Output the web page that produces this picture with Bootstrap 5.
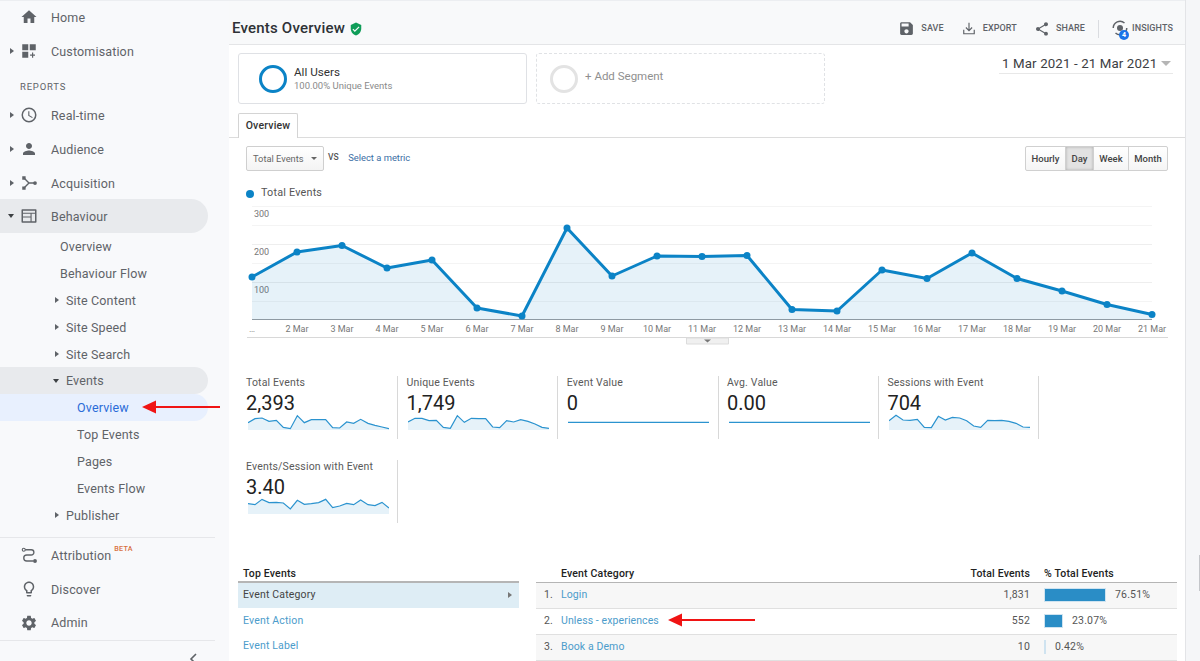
<!DOCTYPE html>
<html lang="en">
<head>
<meta charset="utf-8">
<title>Events Overview</title>
<link href="https://cdn.jsdelivr.net/npm/bootstrap@5.3.0/dist/css/bootstrap.min.css" rel="stylesheet">
<style>
html,body{height:661px;overflow:hidden;margin:0}
body{font-family:Roboto,"Liberation Sans",sans-serif;color:#333;background:#fff;position:relative}
.shell{height:661px}
.side{width:229px;flex:none;background:#f8f9fb;color:#5f6368;font-size:12.5px;letter-spacing:.15px;box-shadow:inset 0 1px 0 #eceef1}
.srow{height:34px;display:flex;align-items:center;position:relative;width:208px}
.srow .ico{position:absolute;left:20px;top:50%;transform:translateY(-50%);width:18px;height:18px;fill:#5f6368}
.srow .lbl{margin-left:51px;margin-top:2px}
.srow.sub{height:27px}
.srow.sub .lbl{margin-left:60px}
.srow.sub2 .lbl{margin-left:66px}
.srow.sub3 .lbl{margin-left:77px}
.srow.short{height:33.5px}
.tri{position:absolute;width:0;height:0;border-style:solid}
.tri-r{border-width:3.5px 0 3.5px 4px;border-color:transparent transparent transparent #5f6368;left:10px;top:50%;margin-top:-3.5px}
.tri-d{border-width:4px 3.5px 0 3.5px;border-color:#3c4043 transparent transparent transparent;left:8px;top:50%;margin-top:-2px}
.sub2 .tri-r{left:55px}
.sub2 .tri-d{left:53px}
.sec-lab{height:30px;padding:13px 0 0 20px;font-size:9.5px;letter-spacing:.8px;color:#5f6368;line-height:12px}
.pill{background:#e8eaed;border-radius:0 17px 17px 0}
.pill-blue{background:#e8f0fe;color:#2b6cd8;border-radius:0 14px 14px 0}
.up1{margin-top:-1px}
.sdiv{height:1px;background:#e6e7ea;width:215px}
.beta{font-size:7.2px;color:#d9713f;font-weight:500;vertical-align:5px;margin-left:3px;letter-spacing:.3px}
.collapse-bar{height:21px;width:215px;display:flex;justify-content:flex-end;padding:12px 18px 0 0}
.mainp{width:956px;flex:none;background:#fff;overflow:hidden}
.gutter{flex:1;background:#f5f6f8;border-left:1px solid #e3e4e7}
.thumb{width:1px;height:36px;background:#c4c6ca;margin:555px 0 0 auto}
.ghead{height:45px;background:#f8f9fa;border-top:1px solid #eceef1;border-bottom:1px solid #e4e5e7;padding:12px 12px 0 3px}
.gtitle{font-size:15px;font-weight:500;color:#2e3236;letter-spacing:.2px}
.acts{font-size:9px;font-weight:500;color:#5f6368;letter-spacing:.1px}
.acts svg{fill:#5f6368;display:block}
.acts .gap6{margin-left:6px}
.acts .gap7{margin-left:7px}
.vsep{width:1px;height:18px;background:#dadce0}
.insight-wrap{position:relative;width:17px;height:20px;margin-left:12px;margin-right:4px}
.ibadge{position:absolute;right:-1px;bottom:-1px;width:10px;height:10px;border-radius:50%;background:#1a73e8;color:#fff;font-size:7px;font-weight:700;line-height:10px;text-align:center;letter-spacing:0}
.segbar{height:68px;padding:8px 12px 0 9px}
.segcard{width:289px;height:51px;border:1px solid #dfe1e5;border-radius:3px;background:#fff}
.segdash{width:289px;height:51px;border:1px dashed #e0e2e5;border-radius:3px;margin-left:9px}
.ring{width:28px;height:28px;border-radius:50%;border:3.5px solid #0b83c6;margin-left:20px;margin-right:7px;flex:none}
.ring-g{border-color:#e3e3e3;margin-left:13px;margin-right:7px}
.seg-a{font-size:11.7px;color:#333;line-height:13px}
.seg-b{font-size:9.5px;color:#8a8a8a;line-height:13px}
.seg-add{font-size:11.5px;color:#8f8f8f;margin-bottom:4px}
.daterange{width:174px;height:21px;border-bottom:1px solid #e8e8e8;font-size:13.3px;color:#3c4043;padding-left:3px;margin-left:auto;letter-spacing:.12px;line-height:19px;display:flex;justify-content:space-between;align-items:center;white-space:nowrap}
.caret-g{width:0;height:0;border-style:solid;border-width:5px 5px 0 5px;border-color:#b5b5b5 transparent transparent;margin-right:2.5px}
.tabbar{height:25px;padding-left:9px;border-bottom:1px solid #dcdcdc}
.gtab{width:60px;height:25px;border:1px solid #d4d4d4;border-bottom:0;background:#fff;font-size:10.5px;font-weight:500;color:#333;text-align:center;line-height:24px;border-radius:2px 2px 0 0;letter-spacing:.2px;position:relative}
.ctrlbar{height:25px;margin-top:8px;padding:0 17px 0 17px;display:flex;align-items:center}
.gsel{width:78px;height:25px;border:1px solid #cfcfcf;border-radius:2px;background:linear-gradient(#fff,#f4f4f4);font-size:9.3px;color:#666;display:flex;align-items:center;justify-content:space-between;padding:0 6px 0 6px}
.caret-d{width:0;height:0;border-style:solid;border-width:3.5px 3.5px 0 3.5px;border-color:#666 transparent transparent}
.vs{font-size:8.5px;color:#555;margin-left:4px;font-weight:500;margin-bottom:2px}
.metric-link{font-size:9.4px;color:#3a6ea5;margin-left:9.5px;text-decoration:none}
.gbtn{display:inline-block;height:25px;font-size:9.5px;font-weight:500;color:#444;line-height:23px;border:1px solid #d0d0d0;background:linear-gradient(#fff,#f5f5f5);text-align:center;margin-left:-1px}
.gbtn.on{background:#e2e2e2;box-shadow:inset 0 0 3px #aaa}
.gbtn.g1{border-radius:2px 0 0 2px;width:41px}
.gbtn.g2{width:29px}.gbtn.g3{width:36px}
.gbtn.g4{border-radius:0 2px 2px 0;width:40px}
.legendr{height:15px;margin:15px 0 0 17px;font-size:10.8px;color:#555;display:flex;align-items:center;letter-spacing:.2px}
.ldot{width:8px;height:8px;border-radius:50%;background:#0b83c6;margin-right:7px;flex:none}
.chartsvg{display:block}
.chartsvg text{font-family:Roboto,"Liberation Sans",sans-serif;font-size:9px;fill:#777}
.mrow{display:flex;padding-left:17px}
.mcell{width:160.3px;height:63px;border-right:1px solid #d8d8d8;flex:none;position:relative}
.mt{font-size:10.5px;color:#5a5a5a;line-height:12px;letter-spacing:.17px;margin-top:1px}
.mv{font-size:20px;line-height:24px;color:#222;margin-top:2px}
.spark{display:block;width:141px;height:16px;margin:-1px 0 0 2px}
.mcell+.mcell{padding-left:8.5px}
.mcell+.mcell .spark{margin-left:1.5px}
.tops{display:flex;padding-left:9px;margin-top:44px}
.lcol{width:281px;flex:none}
.rcol{width:641px;flex:none;margin-left:17px}
.thd{font-size:10.5px;font-weight:500;color:#222;height:16px;line-height:14px;border-bottom:2px solid #b5b5b5;letter-spacing:.17px}
.lcol .thd{padding-left:5px}
.lcol .list-group-item{border:0;padding:0 5px;background:transparent;font-size:10.5px;height:25px;line-height:24px;letter-spacing:.17px;color:#4c9ccb;display:flex;justify-content:space-between;align-items:center;border-radius:0}
.lcol .list-group-item.actv{background:#deedf5;color:#444;padding-bottom:1px}
.tri-s{width:0;height:0;border-style:solid;border-width:3px 0 3px 4px;border-color:transparent transparent transparent #777;margin-right:2px}
.rtbl{margin:0;font-size:10.5px;color:#555;letter-spacing:.17px;table-layout:fixed;width:641px;--bs-table-bg:transparent}
.rtbl td,.rtbl th{padding:0;height:26px;border-bottom:1px solid #e0e0e0;vertical-align:middle}
.rtbl thead th{height:15px;line-height:14px;font-size:10.5px;font-weight:500;color:#222;border-bottom:1px solid #b5b5b5;vertical-align:top}
.rtbl tr.alt td{background:#f7f7f7}
.rtbl a{color:#4c9ccb;text-decoration:none;letter-spacing:.1px}
.barwrap{display:flex;align-items:center}
.pbar{height:12px;background:#2a8dc6;border:1px solid #cfe3f0;box-sizing:content-box;margin-right:9px}
.arrow-ov{position:absolute;display:block;overflow:visible}
</style>
</head>
<body>
<div class="d-flex shell">
  <aside class="side">
    <div class="srow"><svg class="ico" viewBox="0 0 24 24"><path d="M10 20v-6h4v6h5v-8h3L12 3 2 12h3v8z"/></svg><span class="lbl">Home</span></div>
    <div class="srow"><span class="tri tri-r"></span><svg class="ico" viewBox="0 0 24 24"><path d="M3 3h8v8H3zM13 3h8v8h-8zM3 13h8v8H3zM16 14h1.6v2.6H20v1.6h-2.4V21H16v-2.8h-2.6v-1.6H16z"/></svg><span class="lbl">Customisation</span></div>
    <div class="sec-lab">REPORTS</div>
    <div class="srow"><span class="tri tri-r"></span><svg class="ico" viewBox="0 0 24 24"><path d="M12 2a10 10 0 1 0 0 20 10 10 0 0 0 0-20zm0 18a8 8 0 1 1 0-16 8 8 0 0 1 0 16zm.5-13H11v6l5.2 3.1.8-1.2-4.5-2.7z"/></svg><span class="lbl">Real-time</span></div>
    <div class="srow"><span class="tri tri-r"></span><svg class="ico" viewBox="0 0 24 24"><path d="M12 12c2.21 0 4-1.79 4-4s-1.79-4-4-4-4 1.79-4 4 1.79 4 4 4zm0 2c-2.67 0-8 1.34-8 4v2h16v-2c0-2.66-5.33-4-8-4z"/></svg><span class="lbl">Audience</span></div>
    <div class="srow"><span class="tri tri-r"></span><svg class="ico" viewBox="0 0 24 24"><path d="M3 3h4.500v4.500H3zM3 16.500h4.500V21H3z"/><circle cx="20" cy="12" r="2.500"/><path d="M6 6l6 6h7h-7l-6 6" fill="none" stroke="#5f6368" stroke-width="1.800"/></svg><span class="lbl">Acquisition</span></div>
    <div class="srow pill up1"><span class="tri tri-d"></span><svg class="ico" viewBox="0 0 24 24"><path d="M3 3h18a1 1 0 0 1 1 1v16a1 1 0 0 1-1 1H3a1 1 0 0 1-1-1V4a1 1 0 0 1 1-1zm1 6v10h10v-5H4v-1.500h10V9zm11.500 0v10H20V9zM4 5v2.500h16V5z" fill-rule="evenodd"/></svg><span class="lbl">Behaviour</span></div>
    <div class="srow sub"><span class="lbl">Overview</span></div>
    <div class="srow sub"><span class="lbl">Behaviour Flow</span></div>
    <div class="srow sub sub2"><span class="tri tri-r"></span><span class="lbl">Site Content</span></div>
    <div class="srow sub sub2"><span class="tri tri-r"></span><span class="lbl">Site Speed</span></div>
    <div class="srow sub sub2"><span class="tri tri-r"></span><span class="lbl">Site Search</span></div>
    <div class="srow sub sub2 pill up1"><span class="tri tri-d"></span><span class="lbl">Events</span></div>
    <div class="srow sub sub3 pill-blue"><span class="lbl">Overview</span></div>
    <div class="srow sub sub3"><span class="lbl">Top Events</span></div>
    <div class="srow sub sub3"><span class="lbl">Pages</span></div>
    <div class="srow sub sub3"><span class="lbl">Events Flow</span></div>
    <div class="srow sub sub2"><span class="tri tri-r"></span><span class="lbl">Publisher</span></div>
    <div class="sdiv mt-2"></div>
    <div class="srow"><svg class="ico" viewBox="0 0 24 24"><circle cx="5" cy="5" r="2" fill="none" stroke="#5f6368" stroke-width="1.500"/><circle cx="20" cy="20" r="2.600"/><path d="M7 5h8a3.500 3.500 0 0 1 0 7H9a3.500 3.500 0 0 0 0 8h9" fill="none" stroke="#5f6368" stroke-width="1.800"/></svg><span class="lbl">Attribution<sup class="beta">BETA</sup></span></div>
    <div class="srow"><svg class="ico" viewBox="0 0 24 24"><path d="M9 21c0 .55.45 1 1 1h4c.55 0 1-.45 1-1v-1H9v1zm3-19C8.140 2 5 5.140 5 9c0 2.380 1.190 4.470 3 5.740V17c0 .55.450 1 1 1h6c.55 0 1-.45 1-1v-2.260c1.810-1.270 3-3.360 3-5.740 0-3.860-3.140-7-7-7zm2.850 11.100l-.85.600V16h-4v-2.300l-.85-.600C7.800 12.160 7 10.630 7 9c0-2.760 2.240-5 5-5s5 2.240 5 5c0 1.630-.8 3.160-2.150 4.100z"/></svg><span class="lbl">Discover</span></div>
    <div class="srow short"><svg class="ico" viewBox="0 0 24 24"><path d="M19.140 12.940c.04-.3.06-.61.06-.94 0-.32-.02-.64-.07-.94l2.030-1.580c.18-.14.23-.41.12-.61l-1.920-3.320c-.12-.22-.37-.29-.59-.22l-2.390.96c-.5-.38-1.030-.7-1.620-.94l-.36-2.540c-.04-.24-.24-.41-.48-.41h-3.840c-.24 0-.43.17-.47.41l-.36 2.540c-.59.24-1.130.57-1.620.94l-2.390-.96c-.22-.08-.47 0-.59.22L2.740 8.870c-.12.21-.08.47.12.61l2.030 1.580c-.05.3-.09.63-.09.94s.02.64.07.94l-2.030 1.580c-.18.14-.23.41-.12.61l1.920 3.320c.12.22.37.29.59.22l2.390-.96c.5.38 1.030.7 1.620.94l.36 2.540c.05.24.24.41.48.41h3.840c.24 0 .44-.17.47-.41l.36-2.540c.59-.24 1.130-.56 1.620-.94l2.390.96c.22.08.47 0 .59-.22l1.920-3.320c.12-.22.07-.47-.12-.61l-2.010-1.580zM12 15.600c-1.980 0-3.600-1.620-3.600-3.600s1.620-3.600 3.600-3.600 3.600 1.620 3.600 3.600-1.620 3.600-3.600 3.600z"/></svg><span class="lbl">Admin</span></div>
    <div class="sdiv"></div>
    <div class="collapse-bar"><svg width="8" height="12" viewBox="0 0 8 12"><path d="M7 1L2 6l5 5" fill="none" stroke="#5f6368" stroke-width="1.600"/></svg></div>
  </aside>

  <main class="mainp">
    <div class="ghead d-flex align-items-center justify-content-between">
      <div class="d-flex align-items-center"><span class="gtitle">Events Overview</span>
        <svg class="ms-1" width="14" height="14" viewBox="0 0 24 24"><path fill="#0f9d58" d="M12 1L3 5v6c0 5.550 3.840 10.740 9 12 5.160-1.260 9-6.450 9-12V5l-9-4zm-2 16l-4-4 1.410-1.410L10 14.170l6.590-6.590L18 9l-8 8z"/></svg></div>
      <div class="acts d-flex align-items-center">
        <svg width="17" height="17" viewBox="0 0 24 24"><path d="M17 3H5c-1.110 0-2 .9-2 2v14c0 1.100.89 2 2 2h14c1.100 0 2-.9 2-2V7l-4-4zm-5 16c-1.660 0-3-1.340-3-3s1.340-3 3-3 3 1.340 3 3-1.340 3-3 3zm3-10H5V5h10v4z"/></svg>
        <span class="gap6">SAVE</span>
        <svg style="margin-left:18px" width="14" height="15" viewBox="0 0 24 24"><path d="M11 2h2v11.200l3.600-3.600L18 11l-6 6-6-6 1.400-1.400 3.600 3.600zM2 14h2v6h16v-6h2v8H2z"/></svg>
        <span class="gap7">EXPORT</span>
        <svg style="margin-left:17px" width="16" height="16" viewBox="0 0 24 24"><path d="M18 16.080c-.76 0-1.440.3-1.960.77L8.910 12.700c.05-.23.09-.46.09-.7s-.04-.47-.09-.7l7.050-4.110c.54.5 1.250.81 2.040.81 1.660 0 3-1.340 3-3s-1.340-3-3-3-3 1.340-3 3c0 .24.04.47.09.7L8.040 9.810C7.500 9.310 6.790 9 6 9c-1.660 0-3 1.340-3 3s1.340 3 3 3c.79 0 1.500-.31 2.040-.81l7.120 4.160c-.05.21-.08.43-.08.65 0 1.610 1.310 2.920 2.920 2.920s2.920-1.310 2.920-2.920-1.310-2.920-2.920-2.920z"/></svg>
        <span class="gap6">SHARE</span>
        <span class="vsep" style="margin-left:13px"></span>
        <span class="insight-wrap"><svg width="18" height="18" viewBox="0 0 24 24"><circle cx="12" cy="12" r="4"/><path d="M3 12a9 9 0 0 1 15-6.700M21 12a9 9 0 0 1-15 6.700" fill="none" stroke="#5f6368" stroke-width="2"/></svg><span class="ibadge">4</span></span>
        <span>INSIGHTS</span>
      </div>
    </div>

    <div class="segbar d-flex">
      <div class="segcard d-flex align-items-center"><span class="ring"></span><div><div class="seg-a">All Users</div><div class="seg-b">100.00% Unique Events</div></div></div>
      <div class="segdash d-flex align-items-center"><span class="ring ring-g"></span><span class="seg-add">+ Add Segment</span></div>
      <div class="daterange">1 Mar 2021 - 21 Mar 2021<span class="caret-g"></span></div>
    </div>

    <div class="tabbar"><div class="gtab">Overview</div></div>

    <div class="ctrlbar">
      <div class="gsel">Total Events<span class="caret-d"></span></div>
      <span class="vs">VS</span>
      <a class="metric-link" href="#">Select a metric</a>
      <div class="ms-auto d-flex">
        <span class="gbtn g1">Hourly</span><span class="gbtn g2 on">Day</span><span class="gbtn g3">Week</span><span class="gbtn g4">Month</span>
      </div>
    </div>

    <div class="legendr"><span class="ldot"></span>Total Events</div>

    <svg class="chartsvg" width="956" height="144" viewBox="229 201 956 144">
      <g stroke="#f4f4f4" stroke-width="1">
        <path d="M252 206.500H1152M252 225.500H1152M252 263.500H1152M252 301.500H1152"/>
      </g>
      <g stroke="#eeeeee" stroke-width="1"><path d="M252 244.500H1152M252 282.500H1152"/></g>
      <text x="254" y="217">300</text>
      <text x="254" y="255">200</text>
      <text x="254" y="293">100</text>
      <polygon fill="#0b83c6" fill-opacity=".1" points="252,319.500 252,277 297,252 342,245.500 387,268 432,260 477,308 522,316 567,228 612,276 657,256 702,256.500 747,255.500 792,309.500 837,311 882,270 927,278.500 972,253 1017,278.500 1062,291 1107,304.500 1152,314.500 1152,319.500"/>
      <path d="M252 319.500H1152" stroke="#8e9aa3" stroke-width="1"/>
      <polyline fill="none" stroke="#0b83c6" stroke-width="3" stroke-linejoin="round" points="252,277 297,252 342,245.500 387,268 432,260 477,308 522,316 567,228 612,276 657,256 702,256.500 747,255.500 792,309.500 837,311 882,270 927,278.500 972,253 1017,278.500 1062,291 1107,304.500 1152,314.500"/>
      <g fill="#0b83c6">
        <circle cx="252" cy="277" r="3.500"/><circle cx="297" cy="252" r="3.500"/><circle cx="342" cy="245.500" r="3.500"/><circle cx="387" cy="268" r="3.500"/><circle cx="432" cy="260" r="3.500"/><circle cx="477" cy="308" r="3.500"/><circle cx="522" cy="316" r="3.500"/><circle cx="567" cy="228" r="3.500"/><circle cx="612" cy="276" r="3.500"/><circle cx="657" cy="256" r="3.500"/><circle cx="702" cy="256.500" r="3.500"/><circle cx="747" cy="255.500" r="3.500"/><circle cx="792" cy="309.500" r="3.500"/><circle cx="837" cy="311" r="3.500"/><circle cx="882" cy="270" r="3.500"/><circle cx="927" cy="278.500" r="3.500"/><circle cx="972" cy="253" r="3.500"/><circle cx="1017" cy="278.500" r="3.500"/><circle cx="1062" cy="291" r="3.500"/><circle cx="1107" cy="304.500" r="3.500"/><circle cx="1152" cy="314.500" r="3.500"/>
      </g>
      <g text-anchor="middle">
        <text x="252" y="332">…</text><text x="297" y="332">2 Mar</text><text x="342" y="332">3 Mar</text><text x="387" y="332">4 Mar</text><text x="432" y="332">5 Mar</text><text x="477" y="332">6 Mar</text><text x="522" y="332">7 Mar</text><text x="567" y="332">8 Mar</text><text x="612" y="332">9 Mar</text><text x="657" y="332">10 Mar</text><text x="702" y="332">11 Mar</text><text x="747" y="332">12 Mar</text><text x="792" y="332">13 Mar</text><text x="837" y="332">14 Mar</text><text x="882" y="332">15 Mar</text><text x="927" y="332">16 Mar</text><text x="972" y="332">17 Mar</text><text x="1017" y="332">18 Mar</text><text x="1062" y="332">19 Mar</text><text x="1107" y="332">20 Mar</text><text x="1152" y="332">21 Mar</text>
      </g>
      <path d="M247 337.500H1168" stroke="#d8d8d8"/>
      <path d="M686.500 338v6h42v-6z" fill="#f0f0f0" stroke="#dcdcdc"/>
      <path d="M704 339.500h7l-3.500 3z" fill="#777"/>
    </svg>

    <div class="mrow" style="margin-top:31px">
      <div class="mcell" style="width:152px"><div class="mt">Total Events</div><div class="mv">2,393</div>
        <svg class="spark" viewBox="39 150 423 48" preserveAspectRatio="none"><polygon fill="#0b83c6" fill-opacity=".1" points="39,198 39,176 60,164 81,162 102,172 124,169 145,190 166,194 187,155 208,176 229,167 251,167 272,167 293,191 314,192 335,174 356,178 377,166 399,178 420,184 441,189 462,194 462,198"/><polyline fill="none" stroke="#2b93cf" stroke-width="3.600" points="39,176 60,164 81,162 102,172 124,169 145,190 166,194 187,155 208,176 229,167 251,167 272,167 293,191 314,192 335,174 356,178 377,166 399,178 420,184 441,189 462,194"/></svg></div>
      <div class="mcell"><div class="mt">Unique Events</div><div class="mv">1,749</div>
        <svg class="spark" viewBox="39 150 423 48" preserveAspectRatio="none"><polygon fill="#0b83c6" fill-opacity=".1" points="39,198 39,174 60,163 81,163 102,170 124,169 145,190 166,193 187,155 208,175 229,163 251,164 272,164 293,189 314,191 335,170 356,174 377,167 399,172 420,180 441,190 462,193 462,198"/><polyline fill="none" stroke="#2b93cf" stroke-width="3.600" points="39,174 60,163 81,163 102,170 124,169 145,190 166,193 187,155 208,175 229,163 251,164 272,164 293,189 314,191 335,170 356,174 377,167 399,172 420,180 441,190 462,193"/></svg></div>
      <div class="mcell"><div class="mt">Event Value</div><div class="mv">0</div>
        <svg class="spark" viewBox="39 150 423 48" preserveAspectRatio="none"><polyline fill="none" stroke="#2b93cf" stroke-width="3.600" points="39,175 462,175"/></svg></div>
      <div class="mcell"><div class="mt">Avg. Value</div><div class="mv">0.00</div>
        <svg class="spark" viewBox="39 150 423 48" preserveAspectRatio="none"><polyline fill="none" stroke="#2b93cf" stroke-width="3.600" points="39,175 462,175"/></svg></div>
      <div class="mcell"><div class="mt">Sessions with Event</div><div class="mv">704</div>
        <svg class="spark" viewBox="39 150 423 48" preserveAspectRatio="none"><polygon fill="#0b83c6" fill-opacity=".1" points="39,198 39,170 60,154 81,168 102,169 124,166 145,190 166,191 187,157 208,168 229,160 251,162 272,170 293,186 314,190 335,169 356,170 377,169 399,172 420,178 441,189 462,190 462,198"/><polyline fill="none" stroke="#2b93cf" stroke-width="3.600" points="39,170 60,154 81,168 102,169 124,166 145,190 166,191 187,157 208,168 229,160 251,162 272,170 293,186 314,190 335,169 356,170 377,169 399,172 420,178 441,189 462,190"/></svg></div>
    </div>
    <div class="mrow" style="margin-top:21px">
      <div class="mcell" style="width:152px"><div class="mt">Events/Session with Event</div><div class="mv">3.40</div>
        <svg class="spark" viewBox="39 150 423 48" preserveAspectRatio="none"><polygon fill="#0b83c6" fill-opacity=".1" points="39,198 39,167 60,170 81,154 102,164 124,163 145,165 166,183 187,157 208,169 229,167 251,164 272,154 293,179 314,174 335,166 356,170 377,156 399,170 420,173 441,163 462,180 462,198"/><polyline fill="none" stroke="#2b93cf" stroke-width="3.600" points="39,167 60,170 81,154 102,164 124,163 145,165 166,183 187,157 208,169 229,167 251,164 272,154 293,179 314,174 335,166 356,170 377,156 399,170 420,173 441,163 462,180"/></svg></div>
    </div>

    <div class="tops">
      <div class="lcol">
        <div class="thd">Top Events</div>
        <div class="list-group list-group-flush">
          <a class="list-group-item actv" href="#">Event Category<span class="tri-s"></span></a>
          <a class="list-group-item" href="#">Event Action</a>
          <a class="list-group-item" href="#">Event Label</a>
        </div>
      </div>
      <div class="rcol">
        <table class="table rtbl">
          <colgroup><col style="width:25px"><col><col style="width:120px"><col style="width:14px"><col style="width:133px"></colgroup>
          <thead><tr><th></th><th>Event Category</th><th class="text-end">Total Events</th><th></th><th>% Total Events</th></tr></thead>
          <tbody>
            <tr class="alt"><td class="ps-2">1.</td><td><a href="#">Login</a></td><td class="text-end">1,831</td><td></td><td><div class="barwrap"><span class="pbar" style="width:60px"></span>76.51%</div></td></tr>
            <tr><td class="ps-2">2.</td><td><a href="#">Unless - experiences</a></td><td class="text-end">552</td><td></td><td><div class="barwrap"><span class="pbar" style="width:17px"></span>23.07%</div></td></tr>
            <tr class="alt"><td class="ps-2">3.</td><td><a href="#">Book a Demo</a></td><td class="text-end">10</td><td></td><td><div class="barwrap"><span class="pbar" style="width:0"></span>0.42%</div></td></tr>
          </tbody>
        </table>
      </div>
    </div>
  </main>
  <div class="gutter"><div class="thumb"></div></div>
</div>
<svg class="arrow-ov" style="left:142px;top:400px" width="78" height="14" viewBox="0 0 78 14"><path d="M14 6h64v2H14z" fill="#f01414"/><path d="M0 7l14-6.500v13z" fill="#f01414"/></svg>
<svg class="arrow-ov" style="left:668px;top:613px" width="87" height="14" viewBox="0 0 87 14"><path d="M14 6h73v2H14z" fill="#f01414"/><path d="M0 7l14-6.500v13z" fill="#f01414"/></svg>
<script src="https://cdn.jsdelivr.net/npm/bootstrap@5.3.0/dist/js/bootstrap.bundle.min.js"></script>
</body>
</html>
